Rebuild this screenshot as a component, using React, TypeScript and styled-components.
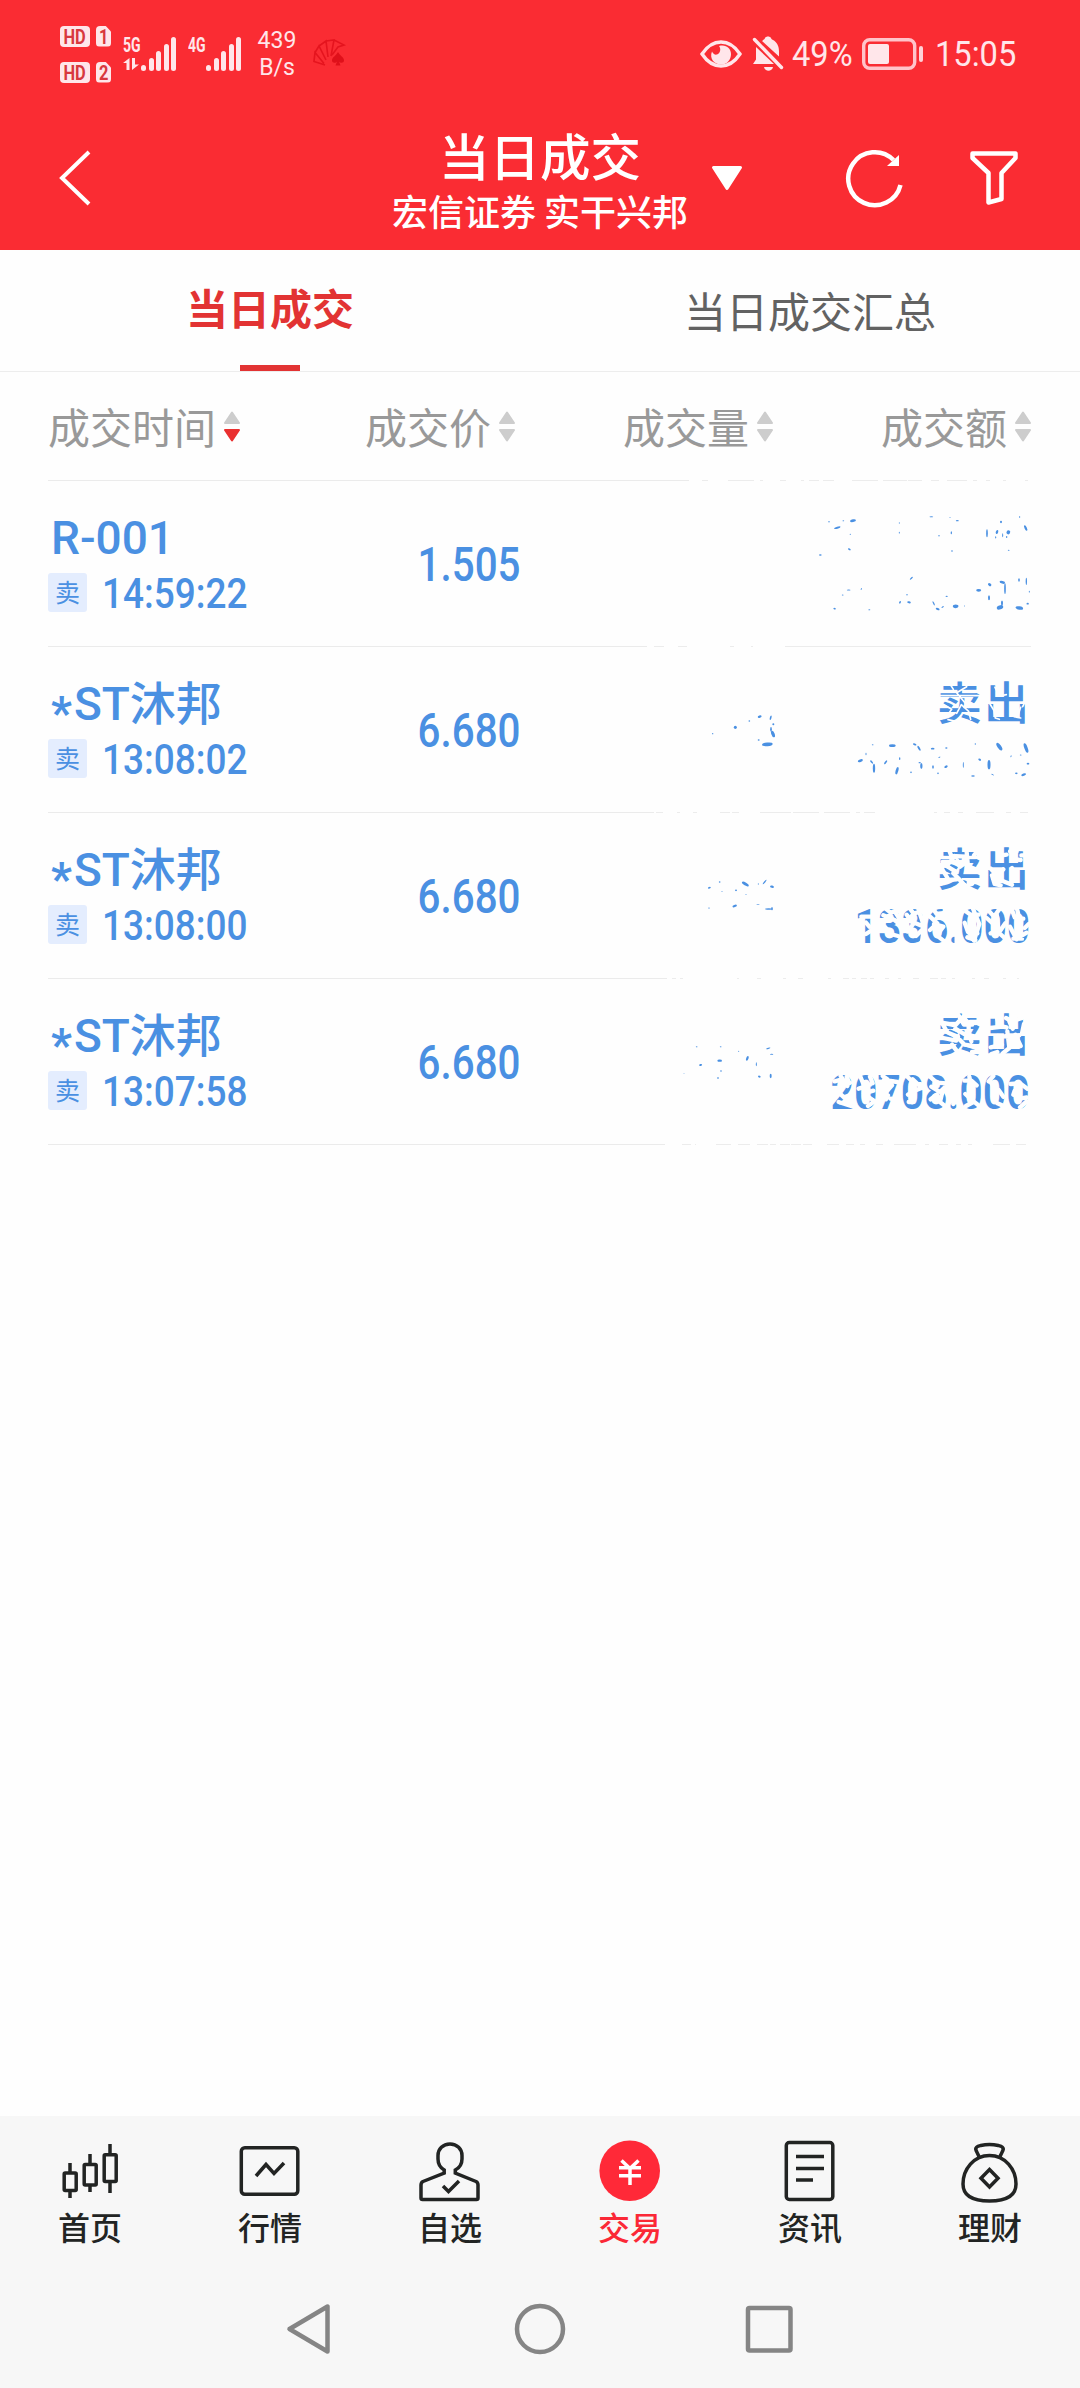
import React from "react";
import styled, { createGlobalStyle } from "styled-components";

const RED = "#fa2c33";
const BLUE = "#4a90e2";
const CJK = '"Noto Sans CJK SC", sans-serif';
const LATIN = 'Roboto, "Noto Sans CJK SC", sans-serif';

const Global = createGlobalStyle`
  body { margin: 0; background: #fefefe; }
  * { box-sizing: border-box; }
`;

const Screen = styled.div`
  width: 1080px;
  height: 2388px;
  display: flex;
  flex-direction: column;
  background: #fefefe;
  font-family: ${CJK};
`;

/* ---------- status bar ---------- */

const Top = styled.header`
  height: 250px;
  background: ${RED};
  color: #fff;
`;

const StatusBar = styled.div`
  height: 108px;
  padding: 0 62px 0 60px;
  display: flex;
  justify-content: space-between;
  color: #ffe6ea;
  font-family: ${LATIN};
`;

const StatusSide = styled.div`
  display: flex;
  align-items: center;
`;

const SimColumn = styled.div`
  display: flex;
  flex-direction: column;
  gap: 15px;
  margin-right: 12px;
`;

const SimRow = styled.div`
  display: flex;
  gap: 6px;
`;

const Chip = styled.span<{ $w: number; $cut?: boolean }>`
  width: ${(p) => p.$w}px;
  height: 21px;
  border-radius: 4px;
  background: #ffe6ea;
  color: #d8383e;
  font: 700 20px/22px ${LATIN};
  display: flex;
  justify-content: center;
  ${(p) => p.$cut && "clip-path: polygon(0 0, 62% 0, 100% 28%, 100% 100%, 0 100%);"}
  span {
    transform: scaleX(0.82);
  }
`;

const Signal = styled.div<{ $w: number; $gap: number }>`
  width: ${(p) => p.$w}px;
  height: 34px;
  margin-right: ${(p) => p.$gap}px;
  display: flex;
  justify-content: space-between;
`;

const SignalLabel = styled.div`
  width: 18px;
  display: flex;
  flex-direction: column;
  gap: 5px;
  font: 700 20px/16px ${LATIN};
  span {
    display: block;
    transform: scaleX(0.7);
    transform-origin: left;
  }
`;

const Bars = styled.div`
  display: flex;
  align-items: flex-end;
  gap: 2.6px;
`;

const Bar = styled.i<{ $h: number }>`
  width: 5px;
  height: ${(p) => p.$h}px;
  border-radius: 2.5px;
  background: #ffe6ea;
`;

const Speed = styled.div`
  width: 40px;
  margin-right: 15px;
  text-align: center;
  font-size: 23px;
  line-height: 27px;
`;

const StatusText = styled.span<{ $w: number; $ml: number }>`
  width: ${(p) => p.$w}px;
  margin-left: ${(p) => p.$ml}px;
  font-size: 35.5px;
  line-height: 40px;
  white-space: nowrap;
  span {
    display: inline-block;
    transform: scaleX(0.92);
    transform-origin: left;
  }
`;

const EyeIcon = styled.svg`
  margin-right: 10px;
`;

/* ---------- title bar ---------- */

const TitleBar = styled.div`
  height: 142px;
  display: grid;
  grid-template-columns: 372px 336px 1fr;
`;

const Back = styled.div`
  padding: 42px 0 0 58px;
`;

const Heading = styled.div`
  display: flex;
  flex-direction: column;
  align-items: center;
  white-space: nowrap;
`;

const Title = styled.h1`
  margin: 19px 0 0;
  font-size: 50.5px;
  line-height: 54px;
  font-weight: 500;
`;

const Subtitle = styled.div`
  margin-top: 9px;
  font-size: 36px;
  line-height: 40px;
  font-weight: 500;
`;

const Actions = styled.div`
  display: flex;
  height: 140px;
  align-items: center;
`;

const RefreshIcon = styled.svg`
  margin-left: 99px;
`;

const FilterIcon = styled.svg`
  margin-left: 64px;
`;

/* ---------- tabs ---------- */

const Tabs = styled.nav`
  height: 122px;
  display: grid;
  grid-template-columns: 1fr 1fr;
  border-bottom: 1px solid #ededed;
`;

const Tab = styled.div<{ $active?: boolean }>`
  display: flex;
  flex-direction: column;
  align-items: center;
  justify-content: space-between;
  padding-top: ${(p) => (p.$active ? 32 : 35)}px;
  font-size: 42px;
  line-height: 50px;
  font-weight: ${(p) => (p.$active ? 700 : 400)};
  color: ${(p) => (p.$active ? "#e23333" : "#626262")};
  &::after {
    content: "";
    width: 60px;
    height: 6px;
    background: ${(p) => (p.$active ? "#e23333" : "transparent")};
  }
`;

/* ---------- table ---------- */

const Table = styled.section`
  flex: 1;
  padding: 0 49px 0 48px;
`;

const Columns = styled.div`
  height: 108px;
  padding-top: 2px;
  display: grid;
  grid-template-columns: 467px 258px 258px;
`;

const HeadGroup = styled.div`
  display: flex;
  justify-content: space-between;
`;

const HeadCell = styled.div`
  display: flex;
  align-items: center;
  justify-content: flex-end;
  gap: 8px;
  font-size: 42px;
  color: #999;
  white-space: nowrap;
  span {
    padding-bottom: 4px;
  }
`;

const Rule = styled.div`
  display: flex;
  height: 1px;
`;

const RuleSolid = styled.div<{ $w: number }>`
  width: ${(p) => p.$w}px;
  background: #ebebeb;
`;

const Row = styled.article`
  height: 165px;
  display: grid;
  grid-template-columns: 472px 100px 411px;
  color: ${BLUE};
`;

const Main = styled.div`
  display: flex;
  justify-content: space-between;
`;

const Stock = styled.div`
  padding-top: 29px;
`;

const Price = styled.div`
  padding-top: 64px;
`;

const Name = styled.div`
  height: 56px;
  padding-left: 3px;
  font: 500 46px/56px ${LATIN};
  white-space: nowrap;
`;

const Star = styled.span`
  display: inline-block;
  height: 40px;
  line-height: 56px;
  margin-right: 2px;
  font-weight: 700;
  vertical-align: -9px;
`;

const TimeLine = styled.div`
  margin-top: 5px;
  height: 42px;
  display: flex;
  align-items: center;
  gap: 15px;
`;

const SellTag = styled.span`
  width: 39px;
  height: 39px;
  border-radius: 3px;
  background: #e4edfe;
  font-size: 25px;
  line-height: 36px;
  text-align: center;
`;

const Num = styled.span<{ $size: number; $origin: string; $x: number }>`
  display: inline-block;
  font: 500 ${(p) => p.$size}px/40px ${LATIN};
  transform: scaleX(${(p) => p.$x});
  transform-origin: ${(p) => p.$origin};
  white-space: nowrap;
`;

const Clock = styled.div`
  height: 40px;
  padding-top: 2px;
`;

const Amount = styled.div`
  grid-column: 3;
  position: relative;
  height: 165px;
  padding-top: 27px;
  text-align: right;
`;

const Side = styled.div`
  height: 56px;
  padding-right: 2px;
  font: 500 45px/54px ${CJK};
  letter-spacing: 2px;
  margin-right: -2px;
`;

const Total = styled.div`
  margin-top: 11px;
  padding-right: 1px;
  height: 40px;
`;

const Wear = styled.svg`
  position: absolute;
  left: 0;
  top: 0;
`;

/* ---------- bottom ---------- */

const Bottom = styled.footer`
  height: 272px;
  background: #f7f7f7;
`;

const Menu = styled.div`
  height: 148px;
  padding-top: 23px;
  display: grid;
  grid-template-columns: repeat(6, 180px);
`;

const MenuItem = styled.div<{ $on?: boolean }>`
  display: flex;
  flex-direction: column;
  align-items: center;
  font-size: 32px;
  line-height: 40px;
  font-weight: 500;
  color: ${(p) => (p.$on ? "#fb2836" : "#222423")};
  svg {
    display: block;
    margin-bottom: 2px;
  }
`;

const SystemNav = styled.div`
  padding: 36px 285px 0;
  display: flex;
  justify-content: space-between;
`;

/* ---------- icons ---------- */

const Sorter = ({ down }: { down?: boolean }) => (
  <svg width="16" height="32" viewBox="0 0 16 32" strokeWidth="2" strokeLinejoin="round">
    <path d="M8 1.500 15 12H1Z" fill="#cdcdcd" stroke="#cdcdcd" />
    <path d="M8 29.500 15 19H1Z" fill={down ? "#ea3030" : "#cdcdcd"} stroke={down ? "#ea3030" : "#cdcdcd"} />
  </svg>
);

const menuIcons: Record<string, React.ReactNode> = {
  首页: (
    <>
      <rect x="6.2" y="34" width="12" height="17.5" rx="1" />
      <path d="M12 24v9M12 52v7M32 15v9M32 47v6M52 5v9M52 43v11" />
      <rect x="26.2" y="25.5" width="12" height="20.5" rx="1" />
      <rect x="46.2" y="15.8" width="12" height="26.7" rx="1" />
    </>
  ),
  行情: (
    <>
      <rect x="3.300" y="8.800" width="56.500" height="46.500" rx="3.500" />
      <path d="m18 37 10-11.500 8 9L46 24" />
    </>
  ),
  自选: (
    <>
      <path d="M26.200 31v3L5 42.500Q3 43.500 3 46v13q0 1.500 1.500 1.500h54q1.500 0 1.500-1.500V46q0-2.500-2-3.500L37.300 34v-3C42 28.500 44 25 44 20v-3.500C44 10 39 5 32 5S20 10 20 16.500V20c0 5 2 8.500 6.200 11Z" />
      <path d="m25 47 5.500 5.500L41 42" />
    </>
  ),
  交易: (
    <>
      <circle cx="31.700" cy="31.800" r="30.300" fill="#ff2938" stroke="none" />
      <path d="m23.500 21.500 8.500 8 8.500-8M21 28.800h22M21 36.800h22M32 29v17" stroke="#fff" />
    </>
  ),
  资讯: (
    <>
      <rect x="8.300" y="3.500" width="46.500" height="57" rx="3" />
      <path d="M18 17.500h28M18 29.500h28M18 41h17" />
    </>
  ),
  理财: (
    <>
      <path d="M21 17.500C19.500 14 18 12 17.700 10c0-2.500 3-3 5-3.500q8.800-1.800 17.600 0c2 .500 5 1 5 3.500-.300 2-1.800 4-3.300 7.500" />
      <path d="M31.500 16.500C16 16.500 5 30 5 45 5 57 14 62 31.500 62S58 57 58 45C58 30 47 16.500 31.500 16.500Z" />
      <path d="m31.500 30.500 8.500 8.700-8.500 8.800-8.500-8.800Z" />
    </>
  ),
};

const MenuIcon = ({ name }: { name: string }) => (
  <svg width="64" height="65" viewBox="0 0 64 65" fill="none" stroke="#222423" strokeWidth="3.5">
    {menuIcons[name]}
  </svg>
);

const SignalBars = () => (
  <Bars>
    {[6, 13, 20, 27, 34].map((h) => (
      <Bar key={h} $h={h} />
    ))}
  </Bars>
);

/* ---------- data ---------- */

type Blob = [number, number, number, number, number?];
type Trade = {
  star?: boolean;
  name: string;
  time: string;
  price: string;
  side?: string;
  total?: string;
  originY: number;
  blobs: Blob[];
  wear?: string;
  rule: { solid: number; bits: [number, number][] };
};

const trades: Trade[] = [
  {
    name: "R-001",
    time: "14:59:22",
    price: "1.505",
    originY: 3,
    blobs: [
      [627, 125, 6, 3], [652, 143, 20, 6, -15], [670, 122, 5, 3], [699, 122, 18, 8, -10], [691, 163, 4, 3],
      [688, 208, 9, 5, 30], [601, 225, 8, 4], [838, 129, 3, 4], [838, 158, 3, 5], [934, 110, 11, 3],
      [990, 112, 5, 2], [1012, 122, 9, 4], [994, 158, 4, 9], [957, 167, 6, 3], [996, 213, 5, 4],
      [1101, 160, 5, 24], [1131, 156, 7, 12, 20], [1127, 172, 3, 7], [1143, 126, 6, 7], [1148, 166, 3, 12],
      [1165, 157, 11, 12, 30], [1160, 171, 4, 6], [1199, 111, 3, 6], [1217, 144, 7, 18, -25], [1166, 211, 5, 3],
      [686, 330, 11, 3], [668, 345, 5, 3], [644, 386, 8, 5, 20], [724, 327, 3, 6, 30], [748, 389, 6, 3],
      [874, 295, 12, 4, -45], [861, 344, 6, 3], [840, 367, 5, 8, 30], [867, 367, 11, 6, 10], [941, 370, 4, 14, -25],
      [953, 387, 12, 6, 20], [968, 381, 8, 4, -35], [980, 349, 7, 4], [1007, 379, 17, 11], [1034, 378, 2, 4],
      [1076, 331, 15, 8], [1109, 314, 11, 8, 35], [1107, 353, 6, 15], [1147, 307, 17, 8, 15], [1155, 326, 5, 32],
      [1146, 369, 6, 15], [1140, 382, 20, 12, -20], [1197, 300, 5, 10], [1198, 384, 23, 10, 10], [1219, 304, 4, 22],
      [1223, 371, 7, 5], [1228, 335, 3, 5],
    ],
    rule: { solid: 599, bits: [[606, 10], [630, 9], [682, 4], [703, 2], [737, 246]] },
  },
  {
    star: true,
    name: "ST沐邦",
    time: "13:08:02",
    price: "6.680",
    side: "卖出",
    originY: 501,
    blobs: [
      [346, 742, 9, 10], [388, 723, 5, 4], [419, 710, 12, 7, -20], [452, 713, 5, 14, 15], [460, 733, 6, 6],
      [453, 748, 5, 14], [459, 762, 10, 21, -20], [442, 793, 32, 11, -5], [416, 780, 6, 5], [278, 761, 4, 4],
      [721, 842, 16, 8, -20], [738, 822, 3, 8], [758, 794, 5, 3], [762, 865, 7, 27], [755, 846, 5, 12, -40],
      [797, 847, 5, 14, 35], [817, 797, 20, 8], [831, 872, 8, 23, 15], [839, 836, 4, 8], [884, 793, 11, 6, 20],
      [897, 805, 6, 17, -30], [873, 877, 5, 5], [904, 858, 7, 18], [899, 848, 7, 4], [938, 806, 11, 5],
      [939, 861, 5, 10], [958, 832, 7, 3, -30], [954, 880, 5, 5], [978, 860, 11, 7, -30], [979, 804, 7, 4],
      [1030, 855, 3, 18], [1059, 888, 11, 5], [1066, 792, 4, 5], [1079, 839, 9, 6, 35], [1107, 854, 9, 28],
      [1138, 800, 11, 27, -35], [1118, 884, 9, 3, 30], [1173, 829, 3, 6, 20], [1189, 880, 8, 5], [1218, 804, 10, 30, -20],
      [1211, 884, 15, 7, -20], [1224, 851, 8, 5], [1202, 825, 5, 3],
    ],
    wear: "M960 647h128M990 612l10 16M1040 620l-30 18 8 10 28 34M965 670l30 18-10 14-24 4M1010 700l14-26 22 20 6 24 M1060 678l20-8M1125 622l14 26 20-4M1110 672l12 20 4 22 12 4M1172 672l6 36 14 4 10-30M1214 668l-6 12M1182 710l20 4M1010 725l-26-6",
    rule: { solid: 606, bits: [[608, 7], [629, 3], [645, 4], [672, 10], [684, 7], [712, 31], [745, 26], [776, 26], [808, 4], [816, 11], [886, 3], [896, 6], [910, 5], [928, 18], [958, 5], [972, 8]] },
  },
  {
    star: true,
    name: "ST沐邦",
    time: "13:08:00",
    price: "6.680",
    side: "卖出",
    total: "1336.000",
    originY: -21,
    blobs: [
      [268, 203, 9, 5, -20], [299, 186, 5, 4], [306, 214, 5, 2], [376, 192, 23, 9, 30], [348, 211, 6, 5],
      [344, 258, 14, 7, -20], [378, 223, 5, 2], [434, 186, 4, 17, 40], [456, 200, 12, 7, 15], [414, 253, 11, 2],
      [446, 267, 22, 5], [456, 266, 5, 10], [415, 192, 3, 4], [267, 264, 5, 3],
    ],
    wear: "M968 88h30M984 82l10 26 44 2-10 16-60 0M1004 108l-24 30 26 16M1012 122l8 18 22-16M1040 96l4 44 34 18M968 150l18 30 24-2M1000 160l14 14 22 24 20-6M1046 186l36 0M1052 142l30 12M1070 96l-8 10M1132 82l14 24 14-2M1180 82l6 36 16 2M1112 146l20 22 18-20M1116 166l8 26 18 4M1176 144l12 34M1146 182l30 12M1170 94l20 0M1204 106l20 0M724 290l30 0M738 308l10 12M756 330l-18 12M792 262l20 16 32-10M790 286l34 14 16 14M796 322l16 20 22 6M828 280l14 22M866 260l14 20 30-6M860 284l20 28-18 22M878 306l34 14-6 46M896 270l12 36M888 348l20-20M936 262l14 20 32-4M930 290l22 20-22 20M942 312l28 8-20 26 28 22M956 282l34 22M1010 340v28M1032 270l20 14 24 0M1034 308l10 28 28 4M1058 264l20 48-16 50M1042 352l24 8M1104 270l18 20 16-22M1100 294l18 16M1130 282l4 38M1112 340l20-6 22 20M1156 310l-18 26M1174 264l10 28M1190 262l8 34 12 0M1170 320l20 38M1204 298l-4 52 20-12M1180 356l26 0M1226 312l-12 12",
    rule: { solid: 619, bits: [[624, 4], [632, 3], [689, 2], [709, 4], [735, 3], [750, 5], [780, 3], [795, 6], [804, 4], [813, 6], [822, 4], [837, 4], [850, 3], [865, 6], [882, 8], [893, 5], [904, 3], [924, 3], [936, 5], [955, 3], [969, 2]] },
  },
  {
    star: true,
    name: "ST沐邦",
    time: "13:07:58",
    price: "6.680",
    side: "卖出",
    total: "20708.000",
    originY: 477,
    blobs: [
      [230, 680, 5, 3], [242, 735, 9, 6, -20], [302, 680, 5, 3], [299, 722, 14, 7], [303, 753, 5, 5],
      [294, 774, 6, 4], [356, 694, 3, 4], [382, 715, 7, 15, 20], [445, 685, 13, 4, -15], [455, 703, 10, 3],
      [409, 733, 3, 12], [418, 770, 8, 6, 20], [452, 768, 6, 13], [192, 760, 3, 2],
    ],
    wear: "M966 608l40 8 22-24M1012 580l20 34 24 0M1030 592l16 18 0 30M1050 606l32 0M968 612l12 22M988 640l26 10-6 12-38-8M1006 626l26 16 46 10M1020 660l14 14 38 6 14-6M972 682l16 0M996 674l20 26 26 4M1048 640l6 24M1056 696l26 0M1112 590l10 0M1128 584l10 34 22 4M1158 594l18 10 30-10M1168 604l10 22M1110 624l38-4M1132 648l36 2 30-4M1162 634l6 50-20 16M1112 682l34-8M1132 696l-18 6M1212 612l-6 28M1186 644l16 34M644 784l22-6 16 20M662 768l12 18M690 788l-20 10M650 812l22 20 28-10M656 846l44 14M680 770l8 20M718 762l12 30 20 2M716 806l20-6M732 820l28-8M750 770l8 20M744 830l20 14-20 14M792 780l40 6M788 768l14 10M816 796l-14 16M826 840l-14-4M804 826l-6 12M860 768l22 22 30 4M864 824l20-12 20-8M878 778l28 26M866 846l12 0M930 770l20 18 30 2M934 800l26 16 22-22M950 824l-18 14M968 812l-8 34 20 16M1000 852l6-8M1034 782l20 0 16 14M1036 822l22 20 20 16M1048 770l4 20M1060 846l-22 12M1110 782l12 22M1120 768l-14 16M1136 810l14 20M1132 850l14 6M1172 792l28-2 22 16M1184 812l-4 12M1200 836l20-4M1200 862l20-18",
    rule: { solid: 617, bits: [[634, 9], [647, 1], [668, 15], [690, 12], [709, 11], [722, 6], [732, 10], [743, 10], [755, 9], [779, 12], [798, 8], [812, 5], [828, 7], [846, 22], [877, 4], [891, 9], [908, 5], [920, 4], [945, 17], [968, 10]] },
  },
];

const headRule: Trade["rule"] = {
  solid: 641,
  bits: [[654, 6], [680, 26], [712, 3], [732, 6], [753, 3], [761, 10], [775, 11], [804, 26], [835, 24], [860, 14], [883, 8], [899, 20], [925, 4], [938, 4], [955, 3], [977, 3]],
};

const Divider = ({ rule }: { rule: Trade["rule"] }) => (
  <Rule>
    <RuleSolid $w={rule.solid} />
    <svg width={983 - rule.solid} height="1" viewBox={`${rule.solid} 0 ${983 - rule.solid} 1`}>
      {rule.bits.map(([x, w]) => (
        <rect key={x} x={x} y="0" width={w} height="1" fill="#ececec" />
      ))}
    </svg>
  </Rule>
);

const TradeRow = ({ trade }: { trade: Trade }) => (
  <>
    <Row>
      <Main>
        <Stock>
          <Name>
            {trade.star && <Star>*</Star>}
            {trade.name}
          </Name>
          <TimeLine>
            <SellTag>卖</SellTag>
            <Clock>
              <Num $size={42} $x={0.88} $origin="left">{trade.time}</Num>
            </Clock>
          </TimeLine>
        </Stock>
        <Price>
          <Num $size={48} $x={0.84} $origin="right">{trade.price}</Num>
        </Price>
      </Main>
      <Amount>
        <Side>{trade.side}</Side>
        <Total>{trade.total && <Num $size={48} $x={0.86} $origin="right">{trade.total}</Num>}</Total>
        <Wear width="411" height="165" viewBox={`0 ${trade.originY} 1233 495`}>
          {trade.wear && (
            <path d={trade.wear} fill="none" stroke="#fefefe" strokeWidth={trade.total ? 13 : 5} strokeLinecap="round" strokeLinejoin="round" />
          )}
          {trade.blobs.map(([x, y, w, h, r = 0], i) => (
            <ellipse key={i} cx={x} cy={y} rx={w / 2} ry={h / 2} fill={BLUE} transform={`rotate(${r} ${x} ${y})`} />
          ))}
        </Wear>
      </Amount>
    </Row>
    <Divider rule={trade.rule} />
  </>
);

export default function App() {
  return (
    <Screen>
      <Global />
      <Top>
        <StatusBar>
          <StatusSide>
            <SimColumn>
              {["1", "2"].map((n) => (
                <SimRow key={n}>
                  <Chip $w={30}>
                    <span>HD</span>
                  </Chip>
                  <Chip $w={15} $cut>
                    <span>{n}</span>
                  </Chip>
                </SimRow>
              ))}
            </SimColumn>
            <Signal $w={53} $gap={12}>
              <SignalLabel>
                <span>5G</span>
                <svg width="16" height="12" viewBox="0 0 16 12" fill="#ffe6ea">
                  <path d="M3.500 12V5H0L6.500 0v12ZM9 0v12L16 6.500h-4V0Z" />
                </svg>
              </SignalLabel>
              <SignalBars />
            </Signal>
            <Signal $w={53} $gap={16}>
              <SignalLabel>
                <span>4G</span>
              </SignalLabel>
              <SignalBars />
            </Signal>
            <Speed>
              439
              <br />
              B/s
            </Speed>
            <svg width="36" height="30" viewBox="0 0 36 30" fill="none" stroke="#e5141e" strokeWidth="1.600">
              <path d="M13 26 2 22.500 3 13.500l9 11M3 13.500 7 7l7 14M7 7l7-5 2 16M14 2l8-1-3 16M22 1l10 5-6 2-6 8" />
              <path d="M26 13c-2 4-6 5-6 8.500 0 2.500 3.500 3 5 1l-1.500 4h5L27 22.500c1.500 2 5 1.500 5-1 0-3.500-4-4.500-6-8.500Z" fill="#df101a" stroke="none" />
            </svg>
          </StatusSide>
          <StatusSide>
            <EyeIcon width="42" height="30" viewBox="0 0 42 30" fill="none" stroke="#ffe6ea" strokeWidth="3.400">
              <path d="M2 15C8 6 14 3 21 3s13 3 19 12c-6 9-12 12-19 12S8 24 2 15Z" />
              <path d="M19 7c2.500 3 1 7.500-2 8.500-2 .500-4-.500-5-3-3 7 2.500 13 9 13s10-5 10-10.500S26 5 19 7Z" fill="#ffe6ea" stroke="none" />
            </EyeIcon>
            <svg width="32" height="36" viewBox="0 0 32 36" fill="#ffe6ea">
              <path d="M4 11 22 28H1l3-4.500ZM10 5c1.500-1.500 2.500-1.500 3-3 1-2 5-2 6 0 .5 1.500 1.500 1.500 3 2.500 4 3 5 7 5 11v5ZM12 31h9c-1 5-8 5-9 0Z" />
              <path d="m2.500 3.500 27 28" stroke="#ffe6ea" strokeWidth="3.400" strokeLinecap="round" />
            </svg>
            <StatusText $w={70} $ml={8}>
              <span>49%</span>
            </StatusText>
            <svg width="62" height="32" viewBox="0 0 62 32" fill="none">
              <rect x="1.700" y="1.700" width="51" height="28.500" rx="6" stroke="#ffc4ca" strokeWidth="3.400" />
              <rect x="6" y="6" width="21" height="20" rx="2" fill="#ffe6ea" />
              <rect x="57" y="8" width="4" height="16" rx="2" fill="#ffd2d8" />
            </svg>
            <StatusText $w={83} $ml={11}>
              <span>15:05</span>
            </StatusText>
          </StatusSide>
        </StatusBar>
        <TitleBar>
          <Back>
            <svg width="34" height="56" viewBox="0 0 34 56" fill="none" stroke="#fff" strokeWidth="4">
              <path d="M31 2 4 28l27 26" />
            </svg>
          </Back>
          <Heading>
            <Title>当日成交</Title>
            <Subtitle>宏信证券 实干兴邦</Subtitle>
          </Heading>
          <Actions>
            <svg width="38" height="26" viewBox="0 0 38 26" fill="#fff" stroke="#fff" strokeWidth="3" strokeLinejoin="round">
              <path d="M5.500 2.500h27L19 23.500Z" />
            </svg>
            <RefreshIcon width="60" height="60" viewBox="0 0 60 60" fill="none">
              <path d="M55.500 37A26.500 26.500 0 1 1 48.500 12" stroke="#fff" strokeWidth="4.500" />
              <path d="M54 7v11H42Z" fill="#fff" />
            </RefreshIcon>
            <FilterIcon width="50" height="56" viewBox="0 0 50 56" fill="none" stroke="#fff" strokeWidth="4.500" strokeLinejoin="round">
              <path d="M3.500 3.500h43V8L32.500 23v26l-13 3.500V23L3.500 8Z" />
            </FilterIcon>
          </Actions>
        </TitleBar>
      </Top>
      <Tabs>
        <Tab $active>当日成交</Tab>
        <Tab>当日成交汇总</Tab>
      </Tabs>
      <Table>
        <Columns>
          <HeadGroup>
            <HeadCell>
              <span>成交时间</span>
              <Sorter down />
            </HeadCell>
            <HeadCell>
              <span>成交价</span>
              <Sorter />
            </HeadCell>
          </HeadGroup>
          <HeadCell>
            <span>成交量</span>
            <Sorter />
          </HeadCell>
          <HeadCell>
            <span>成交额</span>
            <Sorter />
          </HeadCell>
        </Columns>
        <Divider rule={headRule} />
        {trades.map((t) => (
          <TradeRow key={t.time} trade={t} />
        ))}
      </Table>
      <Bottom>
        <Menu>
          {Object.keys(menuIcons).map((name) => (
            <MenuItem key={name} $on={name === "交易"}>
              <MenuIcon name={name} />
              {name}
            </MenuItem>
          ))}
        </Menu>
        <SystemNav>
          <svg width="50" height="58" viewBox="0 0 50 58" fill="none" stroke="#858585" strokeWidth="4.500" strokeLinejoin="round">
            <path d="M42.500 6.500v45L4.500 29Z" />
          </svg>
          <svg width="58" height="58" viewBox="0 0 58 58" fill="none" stroke="#858585" strokeWidth="4.500">
            <circle cx="29" cy="29" r="23" />
          </svg>
          <svg width="50" height="58" viewBox="0 0 50 58" fill="none" stroke="#858585" strokeWidth="4.500">
            <rect x="3" y="8" width="42.500" height="42.500" rx="1.500" />
          </svg>
        </SystemNav>
      </Bottom>
    </Screen>
  );
}
